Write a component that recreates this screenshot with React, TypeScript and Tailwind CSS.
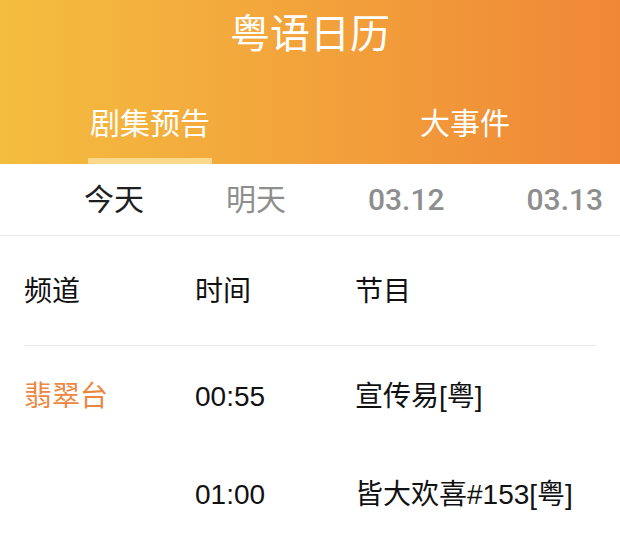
import React from "react";

const FONT = "font-['Liberation_Sans','Noto_Sans_CJK_SC',sans-serif]";

const dates = [
  { label: "今天", active: true, digits: false },
  { label: "明天", active: false, digits: false },
  { label: "03.12", active: false, digits: true },
  { label: "03.13", active: false, digits: true },
];

const programs = [
  { channel: "翡翠台", time: "00:55", title: "宣传易[粤]" },
  { channel: "", time: "01:00", title: "皆大欢喜#153[粤]" },
];

const App: React.FC = () => {
  return (
    <div className={`w-[620px] h-[546px] overflow-hidden bg-white ${FONT}`}>
      {/* Header */}
      <div className="h-[164px] flex flex-col bg-gradient-to-r from-[#f4bd3f] to-[#ef8737] text-white">
        <div className="h-[68px] flex items-center justify-center text-[40px] leading-none">
          粤语日历
        </div>
        <div className="flex-1 flex items-end">
          <div className="w-[300px] flex flex-col items-center">
            <div className="text-[30px] leading-[30px]">剧集预告</div>
            <div className="mt-[19px] h-[6px] w-[124px] bg-[#fcd98b]" />
          </div>
          <div className="flex-1 pl-[10px] flex flex-col items-center">
            <div className="text-[30px] leading-[30px]">大事件</div>
            <div className="mt-[19px] h-[6px] w-[124px]" />
          </div>
        </div>
      </div>

      {/* Date tabs */}
      <div className="h-[72px] flex items-center pl-[43px] border-b border-[#e8e8e8] whitespace-nowrap overflow-hidden font-['Roboto','Noto_Sans_CJK_SC',sans-serif]">
        {dates.map((d) => (
          <div
            key={d.label}
            className={`px-[41px] text-[30px] leading-none ${
              d.digits ? "font-medium" : "font-normal"
            } ${d.active ? "text-[#1f1f1f]" : "text-[#8e8e8e]"}`}
          >
            {d.label}
          </div>
        ))}
      </div>

      {/* Table */}
      <div className="px-6 text-[28px] leading-none text-[#111111]">
        <div className="h-[110px] pt-[2px] grid grid-cols-[171px_160px_1fr] items-center border-b border-[#e6e6e6]">
          <div>频道</div>
          <div>时间</div>
          <div>节目</div>
        </div>
        {programs.map((p) => (
          <div
            key={p.time}
            className="h-[98px] pt-[4px] grid grid-cols-[171px_160px_1fr] items-center"
          >
            <div className="text-[#eb8741]">{p.channel}</div>
            <div>{p.time}</div>
            <div className="whitespace-nowrap">{p.title}</div>
          </div>
        ))}
      </div>
    </div>
  );
};

export default App;
